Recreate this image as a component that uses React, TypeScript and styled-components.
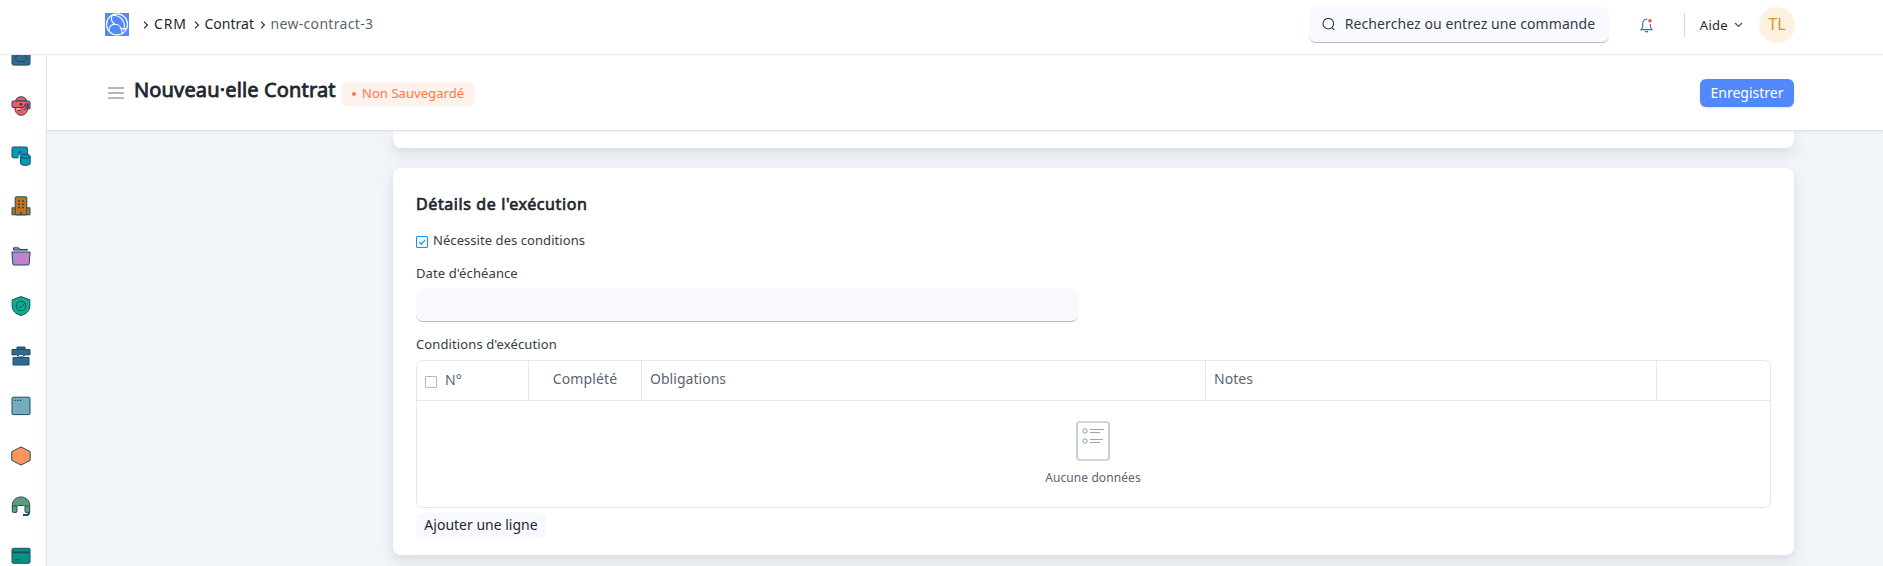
import React from "react";
import styled, { createGlobalStyle } from "styled-components";

const GlobalStyle = createGlobalStyle`
  *, *::before, *::after { box-sizing: border-box; }
  html, body { margin: 0; height: 100%; overflow: hidden; }
  body {
    font-family: "Noto Sans", sans-serif;
    font-size: 14px;
    line-height: 20px;
    color: #1f272e;
    background: #fff;
  }
  button, input { font-family: inherit; margin: 0; }
  svg { display: block; flex: none; }
`;

const Shell = styled.div`
  display: flex;
  flex-direction: column;
  height: 566px;
`;

const Navbar = styled.header`
  flex: none;
  height: 55px;
  display: flex;
  align-items: flex-start;
  justify-content: space-between;
  padding: 7px 88px 0 105px;
  border-bottom: 1px solid #e6edf3;
`;

const Crumbs = styled.nav`
  display: flex;
  align-items: center;
  padding-top: 5px;
`;

const Crumb = styled.span<{ $muted?: boolean; $track?: number; $width: number }>`
  flex: none;
  width: ${(p) => p.$width}px;
  height: 24px;
  line-height: 24px;
  white-space: nowrap;
  letter-spacing: ${(p) => p.$track ?? 0}px;
  color: ${(p) => (p.$muted ? "#5a656f" : "#1f272e")};
`;

const CrumbArrow = styled.span`
  flex: none;
  width: 16px;
  padding: 1px 0 0 5px;
`;

const LogoBox = styled.div`
  width: 24px;
  height: 23px;
  margin-right: 9px;
`;

const NavRight = styled.div`
  display: flex;
  align-items: center;
  height: 36px;
`;

const Search = styled.div`
  display: flex;
  align-items: center;
  width: 300px;
  height: 36px;
  padding: 0 0 1px 13px;
  gap: 10px;
  border-radius: 7px;
  background: #f8f9ff;
  border-bottom: 1px solid #b3bcc5;
  color: #333c44;
  letter-spacing: 0.08px;
  white-space: nowrap;
`;

const Bell = styled.div`
  margin-left: 31px;
`;

const Divider = styled.div`
  width: 1px;
  height: 24px;
  margin-left: 31px;
  background: #d1d8dd;
`;

const Help = styled.div`
  display: flex;
  align-items: center;
  gap: 6px;
  margin-left: 15px;
  font-size: 13px;
  letter-spacing: 0.3px;
`;

const Avatar = styled.div`
  width: 36px;
  height: 36px;
  margin-left: 16px;
  border-radius: 50%;
  background: #fff1e0;
  color: #d9913a;
  font-size: 16px;
  line-height: 35px;
  text-align: center;
`;

const Main = styled.div`
  flex: 1;
  min-height: 0;
  display: flex;
`;

const Sidebar = styled.aside`
  flex: none;
  width: 47px;
  overflow: hidden;
  border-right: 1px solid #e2e7ee;
`;

const SidebarList = styled.div`
  display: flex;
  flex-direction: column;
  margin-top: -24px;
`;

const SidebarItem = styled.div`
  flex: none;
  height: 50px;
  padding: 15px 0 0 11px;
`;

const Page = styled.div`
  flex: 1;
  min-width: 0;
  display: flex;
  flex-direction: column;
  background: #f1f5f9;
`;

const PageHead = styled.div`
  position: relative;
  z-index: 1;
  flex: none;
  display: flex;
  align-items: flex-start;
  height: 76px;
  padding: 24px 89px 0 61px;
  background: #fff;
  border-bottom: 1px solid #dde2e7;
  box-shadow: 0 1px 3px rgba(0, 0, 0, 0.05);
`;

const Burger = styled.div`
  margin: 8px 10px 0 0;
`;

const Title = styled.h1`
  width: 208px;
  margin: 0;
  font-size: 20px;
  font-weight: 400;
  line-height: 22px;
  letter-spacing: 0.15px;
  -webkit-text-stroke: 0.8px currentColor;
  white-space: nowrap;
`;

const Badge = styled.span`
  display: flex;
  align-items: center;
  width: 133px;
  height: 24px;
  margin-top: 3px;
  padding: 0 0 3px 10px;
  gap: 6px;
  border-radius: 6px;
  background: #fff1ec;
  color: #ff7846;
  font-size: 13px;
  letter-spacing: 0.06px;
  white-space: nowrap;
`;

const Dot = styled.i`
  width: 4px;
  height: 4px;
  margin-top: 3px;
  border-radius: 50%;
  background: currentColor;
`;

const SaveButton = styled.button`
  width: 94px;
  height: 28px;
  margin-left: auto;
  padding: 0 0 1px;
  border: 0;
  border-radius: 6px;
  background: #5289fa;
  color: #fff;
  font-size: 14px;
  line-height: 20px;
  box-shadow: 0 1px 2px rgba(0, 0, 0, 0.12);
`;

const Content = styled.div`
  flex: 1;
  min-height: 0;
  overflow: hidden;
  display: flex;
  flex-direction: column;
  gap: 20px;
  padding: 0 89px 0 346px;
`;

const Card = styled.section<{ $continued?: boolean }>`
  flex: none;
  height: ${(p) => (p.$continued ? "17px" : "387px")};
  padding: ${(p) => (p.$continued ? "0" : "24px 23px 0")};
  border-radius: ${(p) => (p.$continued ? "0 0 8px 8px" : "8px")};
  background: #fff;
  box-shadow: 0 8px 16px rgba(25, 39, 52, 0.08), 0 2px 6px rgba(25, 39, 52, 0.05);
`;

const CardTitle = styled.h2`
  margin: 0;
  font-size: 16px;
  font-weight: 400;
  line-height: 24px;
  letter-spacing: 0.6px;
  -webkit-text-stroke: 0.7px currentColor;
`;

const CheckRow = styled.label`
  display: flex;
  align-items: center;
  gap: 5px;
  height: 20px;
  margin-top: 14px;
  font-size: 13px;
  color: #333c44;
  letter-spacing: 0.06px;
`;

const Checkbox = styled.span<{ $checked?: boolean }>`
  flex: none;
  width: 12px;
  height: 12px;
  margin-top: 3px;
  border-radius: 1px;
  border: 1px solid ${(p) => (p.$checked ? "#1a8ee8" : "#b0b9c2")};
  background: ${(p) => (p.$checked ? "#f0f8ff" : "#fff")};
`;

const FieldLabel = styled.div<{ $top: number }>`
  height: 20px;
  margin-top: ${(p) => p.$top}px;
  font-size: 13px;
  color: #333c44;
  letter-spacing: 0.11px;
`;

const DateInput = styled.input`
  display: block;
  width: 662px;
  height: 33px;
  margin-top: 6px;
  border: 0;
  border-bottom: 1px solid #b3bcc5;
  border-radius: 7px;
  background: #f8f9ff;
`;

const Table = styled.div`
  height: 148px;
  margin-top: 6px;
  border: 1px solid #e4e8ec;
  border-radius: 7px;
`;

const HeadRow = styled.div`
  display: grid;
  grid-template-columns: 112px 113px 564px 451px 1fr;
  height: 40px;
  border-bottom: 1px solid #e4e8ec;
  color: #5a656f;
`;

const HeadCell = styled.div<{ $center?: boolean }>`
  padding: 8px 8px 0;
  text-align: ${(p) => (p.$center ? "center" : "left")};
  letter-spacing: ${(p) => (p.$center ? "0.12px" : "0.03px")};
  border-right: 1px solid #e4e8ec;
  &:last-child { border-right: 0; }
`;

const NumberCell = styled(HeadCell)`
  display: flex;
  align-items: flex-start;
  gap: 8px;
  padding-top: 9px;

  ${Checkbox} {
    margin-top: 6px;
  }
`;

const Empty = styled.div`
  display: flex;
  flex-direction: column;
  align-items: center;
  padding: 20px 1px 0 0;
  gap: 7px;
  font-size: 12px;
  letter-spacing: 0.09px;
  color: #5a656f;
`;

const AddButton = styled.button`
  display: block;
  width: 130px;
  height: 26px;
  margin-top: 5px;
  padding: 0 0 2px;
  border: 0;
  border-radius: 6px;
  background: #f8f9ff;
  color: #1f272e;
  font-size: 14px;
  line-height: 20px;
`;

const Chevron = () => (
  <CrumbArrow>
    <svg width="6" height="8" viewBox="0 0 6 8" fill="none" stroke="#1f272e" strokeWidth="1.1">
      <path d="M1 .7 4.4 4 1 7.3" />
    </svg>
  </CrumbArrow>
);

const Logo = () => (
  <svg width="24" height="23" viewBox="0 0 24 23" fill="none" stroke="#fff" strokeWidth="1.1">
    <rect width="24" height="23" fill="#5289fa" stroke="none" />
    <circle cx="12" cy="11.4" r="10.5" />
    <path d="M7.5 2.2C14.500 2 20 7.500 19.300 14c-.2 1.200-.6 2.200-1.300 3.200" />
    <path d="M4 18.300c-.4-4.200 2.300-7 5.800-7 4.200 0 7.200 3.200 7.200 8.600" />
    <path d="M6.800 3c-.8 3.600.4 6.800 3 8.300M14.800 15.200c2 1 4.700.9 6.900-.2" />
  </svg>
);

const line = "#1d4a66";
const icons: React.ReactNode[] = [
  <>
    <rect x="1" y=".5" width="18" height="18.6" rx="1.8" fill="#336a8f" />
    <path d="M6.5 8.5h7l2.3 3.8-2.3 3.2h-7l-2.3-3.2z" />
  </>,
  <>
    <path d="M4 10.500v2.500c0 3.500 3 6.300 6.300 6.300s6.300-2.800 6.300-6.300V6H4z" fill="#f05b65" />
    <path d="M4.800 5C5.200 2 7 .8 10 .8s5.200 1.200 5.600 4.200z" fill="#f05b65" />
    <path d="M2 5h15.500c1 0 1.500.6 1.500 1.500v6.300h-1.800V7.800h-2.400l-2.500 3.700H2c-.7 0-1-.4-1-1V6c0-.6.4-1 1-1z" fill="#f05b65" />
    <path d="M15 9v3.500l-1.700 1M7 14.300c1.200.7 2.400.4 3.200-.5" />
    <path d="M5.500 12.900h3.800" stroke="#fff" />
    <circle cx="10" cy="8.300" r="1" fill={line} />
  </>,
  <>
    <rect x="1" y="1" width="15.4" height="10.8" rx="1.3" fill="#0899b5" />
    <circle cx="8.8" cy="6.2" r="1" fill={line} />
    <path d="M8.2 9.8h11.3v9H8.2z" fill="#fff" stroke="#fff" />
    <path d="M9.5 10v7.3c0 1.3 2.1 2.1 4.8 2.1s4.9-.8 4.9-2.1V10" fill="#0899b5" />
    <ellipse cx="14.3" cy="10.2" rx="4.9" ry="2" fill="#0899b5" />
  </>,
  <>
    <path d="M1 11.8h18v7H1z" fill="#c27518" />
    <rect x="4.2" y=".8" width="11.6" height="18" rx="1" fill="#c27518" />
    <path d="M7 5h2M11 5h2M7 8.3h2M11 8.3h2M7 11.6h2M11 11.6h2M10 19v-3.2" strokeWidth="1.5" />
  </>,
  <>
    <path d="M2.5 1.8h5.3l1.3 1.700h7.400v.6H2.500z" fill="#b97fc9" />
    <path d="M.9 6h18.2l-1 12c0 .7-.5 1-1.1 1H3c-.7 0-1.1-.3-1.1-1z" fill="#c083cf" />
  </>,
  <>
    <path d="M10 .6 18.8 3.8V10c0 5-3.7 8.2-8.8 9.5C4.9 18.2 1.2 15 1.2 10V3.8z" fill="#0eae8c" />
    <circle cx="10" cy="10" r="4.8" />
    <path d="m7.7 10 1.8 1.8 4.7-4.7" />
  </>,
  <>
    <path d="M6 3.500V1h8v2.500M1 3.500h18V9h-5.500v1h-7V9H1z" fill="#336a8f" />
    <path d="M2 11.500h16V19H2z" fill="#336a8f" />
    <path d="M8 9.500h4M1 10.300h5.500M13.500 10.300H19" stroke="#fff" strokeWidth="1.100" />
  </>,
  <>
    <rect x="1" y="1.2" width="18" height="17.4" rx="1.2" fill="#72aebd" />
    <path d="M3.4 4.4h1.4M6 4.4h1.4M8.6 4.4H10" strokeWidth="1.3" />
  </>,
  <path d="m10 .9 9.2 4.8v8.6L10 19.1.8 14.3V5.7z" fill="#fb955c" />,
  <>
    <path d="M1.300 11V9.500C1.300 4.500 5 1 10 1s8.700 3.500 8.700 8.500V11l-4.500-.5c0-.7-.8-1-1.700-1h-5c-1 0-1.700.3-1.700 1z" fill="#5c9f77" />
    <path d="M18.200 15v1.300c0 1.800-1 2.700-2.600 2.700H12" strokeWidth="1.800" />
    <rect x="1.300" y="10" width="4.700" height="6.400" rx="1" fill="#5c9f77" />
    <rect x="14" y="10" width="4.700" height="6.400" rx="1" fill="#5c9f77" />
  </>,
  <>
    <rect x="1" y="2.300" width="18" height="15" rx="1.300" fill="#06937f" />
    <path d="M1.500 6.300h17" strokeWidth="1.800" />
    <path d="M4.500 13.800H9" />
  </>,
];

export default function App() {
  return (
    <Shell>
      <GlobalStyle />
      <Navbar>
        <Crumbs>
          <LogoBox><Logo /></LogoBox>
          <Chevron />
          <Crumb $width={34.5} $track={0.8}>CRM</Crumb>
          <Chevron />
          <Crumb $width={50} $track={0}>Contrat</Crumb>
          <Chevron />
          <Crumb $width={110} $track={0.32} $muted>new-contract-3</Crumb>
        </Crumbs>
        <NavRight>
          <Search>
            <svg width="13" height="14" viewBox="0 0 13 14" fill="none" stroke="#333c44" strokeWidth="1.1">
              <circle cx="6.300" cy="6.700" r="5.300" />
              <path d="m10 10.600 2.300 2.500" />
            </svg>
            Recherchez ou entrez une commande
          </Search>
          <Bell>
            <svg width="13" height="15" viewBox="0 0 13 15" fill="none" stroke="#4a718f" strokeWidth="1.100">
              <path d="M7.500 1.300C4.500.800 2.700 3 2.700 5.500v3.700L1 11.600h11l-1.500-2.400V6M5 13.200c.8.900 2.200.9 3 0" />
              <circle cx="10" cy="2.800" r="1.800" fill="#ff4d4d" stroke="none" />
            </svg>
          </Bell>
          <Divider />
          <Help>
            Aide
            <svg width="9" height="6" viewBox="0 0 9 6" fill="none" stroke="#2c5675" strokeWidth="1.200">
              <path d="m1 1 3.500 3.500L8 1" />
            </svg>
          </Help>
          <Avatar>TL</Avatar>
        </NavRight>
      </Navbar>
      <Main>
        <Sidebar>
          <SidebarList>
            {icons.map((icon, i) => (
              <SidebarItem key={i}>
                <svg width="20" height="20" viewBox="0 0 20 20" fill="none" stroke={line} strokeWidth="1" strokeLinejoin="round">
                  {icon}
                </svg>
              </SidebarItem>
            ))}
          </SidebarList>
        </Sidebar>
        <Page>
          <PageHead>
            <Burger>
              <svg width="16" height="12" viewBox="0 0 16 12" stroke="#98a1a9" strokeWidth="1.500">
                <path d="M0 1h16M0 6h16M0 11h16" />
              </svg>
            </Burger>
            <Title>Nouveau·elle Contrat</Title>
            <Badge><Dot />Non Sauvegardé</Badge>
            <SaveButton>Enregistrer</SaveButton>
          </PageHead>
          <Content>
            <Card $continued />
            <Card>
              <CardTitle>Détails de l'exécution</CardTitle>
              <CheckRow>
                <Checkbox $checked>
                  <svg width="10" height="10" viewBox="0 0 10 10" fill="none" stroke="#1a8ee8" strokeWidth="1.200">
                    <path d="m2.300 5.200 2 1.900 3.800-3.900" />
                  </svg>
                </Checkbox>
                Nécessite des conditions
              </CheckRow>
              <FieldLabel $top={13}>Date d'échéance</FieldLabel>
              <DateInput />
              <FieldLabel $top={12}>Conditions d'exécution</FieldLabel>
              <Table>
                <HeadRow>
                  <NumberCell><Checkbox />N°</NumberCell>
                  <HeadCell $center>Complété</HeadCell>
                  <HeadCell>Obligations</HeadCell>
                  <HeadCell>Notes</HeadCell>
                  <HeadCell />
                </HeadRow>
                <Empty>
                  <svg width="34" height="40" viewBox="0 0 34 40" fill="none" stroke="#8d9dab">
                    <rect x="1" y="1" width="32" height="38" rx="2.500" stroke="#c2cad1" strokeWidth="1.700" />
                    <circle cx="9" cy="10" r="2.200" />
                    <circle cx="9" cy="20" r="2.200" />
                    <path d="M14 8.500h14M14 11.500h10M14 18.500h13M14 21.500h10" strokeWidth=".9" />
                  </svg>
                  Aucune données
                </Empty>
              </Table>
              <AddButton>Ajouter une ligne</AddButton>
            </Card>
          </Content>
        </Page>
      </Main>
    </Shell>
  );
}
